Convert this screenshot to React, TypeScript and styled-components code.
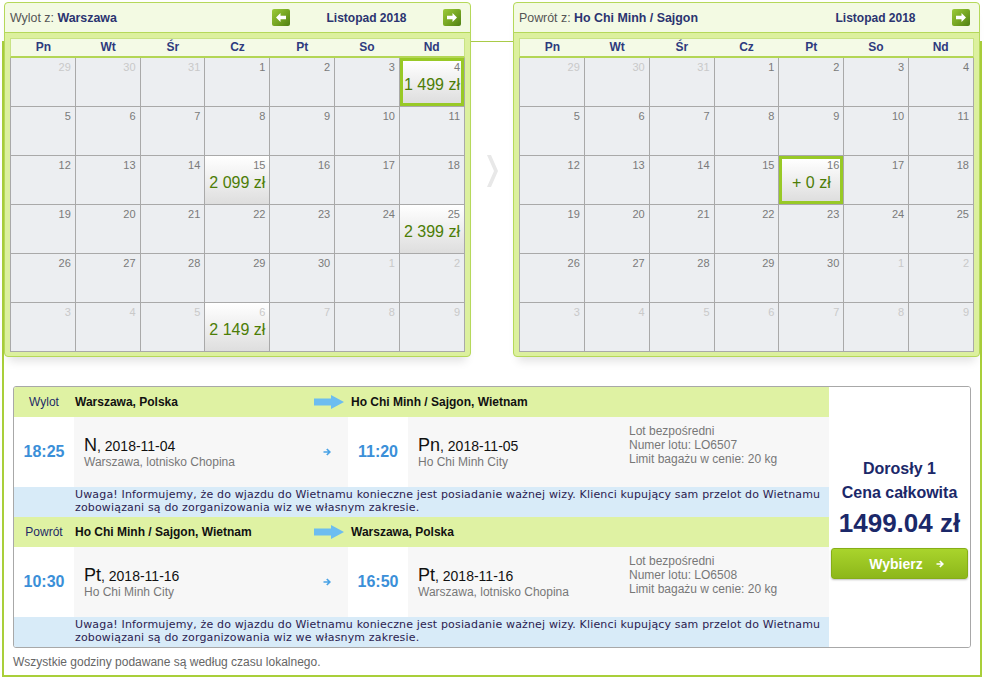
import styled, { createGlobalStyle } from 'styled-components';

const GlobalStyle = createGlobalStyle`
  body {
    margin: 0;
    background: #fff;
    font-family: 'Liberation Sans', Arial, sans-serif;
  }
`;

type Day = { n: number; muted: boolean; price?: string; selected?: boolean };
type PriceMap = Record<string, { price: string; selected?: boolean }>;

const WEEKDAYS = ['Pn', 'Wt', 'Śr', 'Cz', 'Pt', 'So', 'Nd'];

const buildDays = (prices: PriceMap): Day[] => {
  const days: Day[] = [];
  [29, 30, 31].forEach((n) => days.push({ n, muted: true, ...prices[`10-${n}`] }));
  for (let n = 1; n <= 30; n++) days.push({ n, muted: false, ...prices[`11-${n}`] });
  for (let n = 1; n <= 9; n++) days.push({ n, muted: true, ...prices[`12-${n}`] });
  return days;
};

const departDays = buildDays({
  '11-4': { price: '1 499 zł', selected: true },
  '11-15': { price: '2 099 zł' },
  '11-25': { price: '2 399 zł' },
  '12-6': { price: '2 149 zł' },
});

const returnDays = buildDays({
  '11-16': { price: '+ 0 zł', selected: true },
});

const NavArrow = ({ dir }: { dir: 'left' | 'right' }) => (
  <svg width="10" height="9" viewBox="0 0 10 9">
    {dir === 'left' ? (
      <path d="M0 4.5 L4.5 0 V2.8 H10 V6.2 H4.5 V9 Z" fill="#fff" />
    ) : (
      <path d="M10 4.5 L5.5 0 V2.8 H0 V6.2 H5.5 V9 Z" fill="#fff" />
    )}
  </svg>
);

const BigArrow = () => (
  <svg width="30" height="14" viewBox="0 0 30 14">
    <path d="M0 3.5 H17 V0 L30 7 L17 14 V10.5 H0 Z" fill="#6cbdf0" />
  </svg>
);

const SmallArrow = ({ color }: { color: string }) => (
  <svg width="8" height="8" viewBox="0 0 8 8">
    <path d="M0.5 4 H6.8 M3.8 1 L6.8 4 L3.8 7" stroke={color} strokeWidth="1.7" fill="none" />
  </svg>
);

const Calendar = ({ label, city, days, showPrev }: { label: string; city: string; days: Day[]; showPrev: boolean }) => (
  <Panel>
    <PanelHeader>
      <PanelTitle>
        {label} <b>{city}</b>
      </PanelTitle>
      <Nav>
        <NavButton $hidden={!showPrev}>
          <NavArrow dir="left" />
        </NavButton>
        <MonthLabel>Listopad 2018</MonthLabel>
        <NavButton>
          <NavArrow dir="right" />
        </NavButton>
      </Nav>
    </PanelHeader>
    <PanelBody>
      <WeekHeader>
        {WEEKDAYS.map((d) => (
          <WeekDay key={d}>{d}</WeekDay>
        ))}
      </WeekHeader>
      <DaysGrid>
        {days.map((d, i) => (
          <DayCell key={i} $priced={!!d.price} $selected={!!d.selected}>
            <DayNum $muted={d.muted}>{d.n}</DayNum>
            {d.price && <DayPrice>{d.price}</DayPrice>}
          </DayCell>
        ))}
      </DaysGrid>
    </PanelBody>
  </Panel>
);

type Stop = { time: string; dayName: string; date: string; place: string };

const Segment = ({
  label,
  from,
  to,
  dep,
  arr,
  flightNo,
}: {
  label: string;
  from: string;
  to: string;
  dep: Stop;
  arr: Stop;
  flightNo: string;
}) => (
  <>
    <SegmentHead>
      <HeadLabel>{label}</HeadLabel>
      <HeadCity $width={239}>{from}</HeadCity>
      <ArrowSlot>
        <BigArrow />
      </ArrowSlot>
      <HeadCity>{to}</HeadCity>
    </SegmentHead>
    <DetailRow>
      <TimeCell>{dep.time}</TimeCell>
      <StopCell $width={274}>
        <StopInfo>
          <DateLine>
            <DayName>{dep.dayName}</DayName>, {dep.date}
          </DateLine>
          <Place>{dep.place}</Place>
        </StopInfo>
        <StopArrow>
          <SmallArrow color="#4aa3e6" />
        </StopArrow>
      </StopCell>
      <TimeCell>{arr.time}</TimeCell>
      <StopCell>
        <StopInfo $width={211}>
          <DateLine>
            <DayName>{arr.dayName}</DayName>, {arr.date}
          </DateLine>
          <Place>{arr.place}</Place>
        </StopInfo>
        <Meta>
          <div>Lot bezpośredni</div>
          <div>Numer lotu: {flightNo}</div>
          <div>Limit bagażu w cenie: 20 kg</div>
        </Meta>
      </StopCell>
    </DetailRow>
    <Notice>
      Uwaga! Informujemy, że do wjazdu do Wietnamu konieczne jest posiadanie ważnej wizy. Klienci kupujący sam
      przelot do Wietnamu zobowiązani są do zorganizowania wiz we własnym zakresie.
    </Notice>
  </>
);

const App = () => (
  <>
    <GlobalStyle />
    <Frame>
      <CalendarRow>
        <Calendar label="Wylot z:" city="Warszawa" days={departDays} showPrev />
        <Gap>
          <svg width="11" height="32" viewBox="0 0 11 32">
            <polygon points="0,0 4,0 11,16 4,32 0,32 7,16" fill="#e8e8e8" />
          </svg>
        </Gap>
        <Calendar label="Powrót z:" city="Ho Chi Minh / Sajgon" days={returnDays} showPrev={false} />
      </CalendarRow>

      <Results>
        <Flights>
          <Segment
            label="Wylot"
            from="Warszawa, Polska"
            to="Ho Chi Minh / Sajgon, Wietnam"
            dep={{ time: '18:25', dayName: 'N', date: '2018-11-04', place: 'Warszawa, lotnisko Chopina' }}
            arr={{ time: '11:20', dayName: 'Pn', date: '2018-11-05', place: 'Ho Chi Minh City' }}
            flightNo="LO6507"
          />
          <Segment
            label="Powrót"
            from="Ho Chi Minh / Sajgon, Wietnam"
            to="Warszawa, Polska"
            dep={{ time: '10:30', dayName: 'Pt', date: '2018-11-16', place: 'Ho Chi Minh City' }}
            arr={{ time: '16:50', dayName: 'Pt', date: '2018-11-16', place: 'Warszawa, lotnisko Chopina' }}
            flightNo="LO6508"
          />
        </Flights>
        <PriceCol>
          <PriceLabel>Dorosły 1</PriceLabel>
          <PriceLabel>Cena całkowita</PriceLabel>
          <Total>1499.04 zł</Total>
          <ChooseButton>
            Wybierz
            <SmallArrow color="#fff" />
          </ChooseButton>
        </PriceCol>
      </Results>

      <Footnote>Wszystkie godziny podawane są według czasu lokalnego.</Footnote>
    </Frame>
  </>
);

export default App;

const Frame = styled.div`
  margin: 41px 2px 0;
  width: 980px;
  box-sizing: border-box;
  border: 2px solid #a9cf3a;
  border-top-width: 1px;
  border-top-color: #a9cb48;
`;

const CalendarRow = styled.div`
  display: flex;
  margin-top: -40px;
`;

const Panel = styled.div`
  width: 467px;
  box-sizing: border-box;
  border: 1px solid #b5d85a;
  border-radius: 4px;
  background: #dcf09e;
  box-shadow: 0 9px 9px -5px rgba(0, 0, 0, 0.12);
`;

const PanelHeader = styled.div`
  height: 29px;
  display: flex;
  align-items: center;
  justify-content: space-between;
  padding: 0 9px 0 5px;
  background: #f3fae3;
  border-bottom: 1px solid #b5d85a;
  border-radius: 4px 4px 0 0;
`;

const PanelTitle = styled.div`
  font-size: 12.4px;
  color: #555;
  b {
    color: #2b3470;
  }
`;

const Nav = styled.div`
  display: flex;
  align-items: center;
  width: 189px;
  justify-content: space-between;
`;

const NavButton = styled.div<{ $hidden?: boolean }>`
  width: 18px;
  height: 17px;
  border-radius: 2px;
  display: flex;
  align-items: center;
  justify-content: center;
  background: linear-gradient(135deg, #9ccb3a 0%, #74a421 55%, #4f7f14 100%);
  visibility: ${(p) => (p.$hidden ? 'hidden' : 'visible')};
`;

const MonthLabel = styled.div`
  font-size: 12px;
  font-weight: bold;
  color: #2b3470;
`;

const PanelBody = styled.div`
  padding: 5px 5px 4px;
`;

const WeekHeader = styled.div`
  display: grid;
  grid-template-columns: repeat(7, 1fr);
  height: 17px;
  background: #f4fae6;
  border: 1px solid #c8e384;
  border-bottom: 2px solid #b3d655;
`;

const WeekDay = styled.div`
  font-size: 12px;
  font-weight: bold;
  color: #2e3a7e;
  text-align: center;
  line-height: 17px;
`;

const DaysGrid = styled.div`
  display: grid;
  grid-template-columns: repeat(7, 1fr);
  grid-auto-rows: 48px;
  gap: 1px;
  padding: 0 1px 1px;
  background: #a9a9a9;
`;

const DayCell = styled.div<{ $priced: boolean; $selected: boolean }>`
  box-sizing: border-box;
  display: flex;
  flex-direction: column;
  background: ${(p) => (p.$priced ? 'linear-gradient(#ffffff, #dedede)' : '#eceef1')};
  border: ${(p) => (p.$selected ? '3px solid #98c926' : 'none')};
  padding: ${(p) => (p.$selected ? '0 1px' : '3px 4px 0')};
`;

const DayNum = styled.div<{ $muted: boolean }>`
  font-size: 11px;
  line-height: 13px;
  text-align: right;
  color: ${(p) => (p.$muted ? '#c9c9c9' : '#7a7a7a')};
`;

const DayPrice = styled.div`
  margin-top: 2px;
  font-size: 16px;
  line-height: 18px;
  text-align: center;
  color: #4c7d06;
  white-space: nowrap;
`;

const Gap = styled.div`
  width: 42px;
  display: flex;
  justify-content: center;
  padding-top: 153px;
  box-sizing: border-box;
`;

const Results = styled.div`
  display: flex;
  margin: 29px 9px 0;
  border: 1px solid #a8a8a8;
  border-radius: 3px;
  overflow: hidden;
`;

const Flights = styled.div`
  width: 815px;
`;

const SegmentHead = styled.div`
  display: flex;
  align-items: center;
  height: 30px;
  background: #dff2a3;
  font-size: 12px;
`;

const HeadLabel = styled.div`
  width: 60px;
  text-align: center;
  color: #1e2a66;
`;

const HeadCity = styled.div<{ $width?: number }>`
  width: ${(p) => (p.$width ? `${p.$width}px` : 'auto')};
  padding-left: 1px;
  font-weight: bold;
  color: #111;
`;

const ArrowSlot = styled.div`
  display: flex;
  margin-right: 6px;
`;

const DetailRow = styled.div`
  display: flex;
  height: 70px;
`;

const TimeCell = styled.div`
  width: 60px;
  flex-shrink: 0;
  display: flex;
  align-items: center;
  justify-content: center;
  background: #fff;
  font-size: 16px;
  font-weight: bold;
  color: #3b8fd8;
`;

const StopCell = styled.div<{ $width?: number }>`
  display: flex;
  align-items: center;
  box-sizing: border-box;
  width: ${(p) => (p.$width ? `${p.$width}px` : 'auto')};
  flex: ${(p) => (p.$width ? 'none' : '1')};
  padding-left: 10px;
  background: #f7f7f7;
`;

const StopInfo = styled.div<{ $width?: number }>`
  width: ${(p) => (p.$width ? `${p.$width}px` : 'auto')};
  flex: ${(p) => (p.$width ? 'none' : '1')};
`;

const DateLine = styled.div`
  font-size: 14px;
  line-height: 18px;
  color: #111;
`;

const DayName = styled.span`
  font-size: 18px;
`;

const Place = styled.div`
  font-size: 12px;
  line-height: 14px;
  color: #777;
`;

const StopArrow = styled.div`
  display: flex;
  margin-right: 17px;
`;

const Meta = styled.div`
  align-self: flex-start;
  padding-top: 7px;
  font-size: 12px;
  line-height: 14px;
  color: #777;
`;

const Notice = styled.div`
  height: 30px;
  box-sizing: border-box;
  padding: 1px 6px 3px 61px;
  display: flex;
  align-items: center;
  background: #d8ebf8;
  font-family: 'DejaVu Sans', Verdana, sans-serif;
  font-size: 11px;
  line-height: 13px;
  letter-spacing: 0.16px;
  color: #2b2250;
`;

const PriceCol = styled.div`
  flex: 1;
  display: flex;
  flex-direction: column;
  align-items: center;
  justify-content: center;
  background: #fff;
  padding-top: 2px;
`;

const PriceLabel = styled.div`
  font-size: 16px;
  line-height: 24px;
  font-weight: bold;
  color: #1b2869;
`;

const Total = styled.div`
  margin-top: 2px;
  font-size: 26px;
  line-height: 32px;
  font-weight: bold;
  color: #1b2869;
`;

const ChooseButton = styled.div`
  margin-top: 9px;
  width: 137px;
  height: 31px;
  box-sizing: border-box;
  display: flex;
  align-items: center;
  justify-content: center;
  gap: 13px;
  padding-left: 14px;
  border-radius: 3px;
  background: linear-gradient(#a9d42c, #8db71a);
  border: 1px solid #86ae17;
  box-shadow: 0 1px 2px rgba(0, 0, 0, 0.25);
  font-size: 14px;
  font-weight: bold;
  color: #fff;
`;

const Footnote = styled.div`
  padding: 7px 9px 6px;
  font-size: 12px;
  line-height: 14px;
  color: #666;
`;
